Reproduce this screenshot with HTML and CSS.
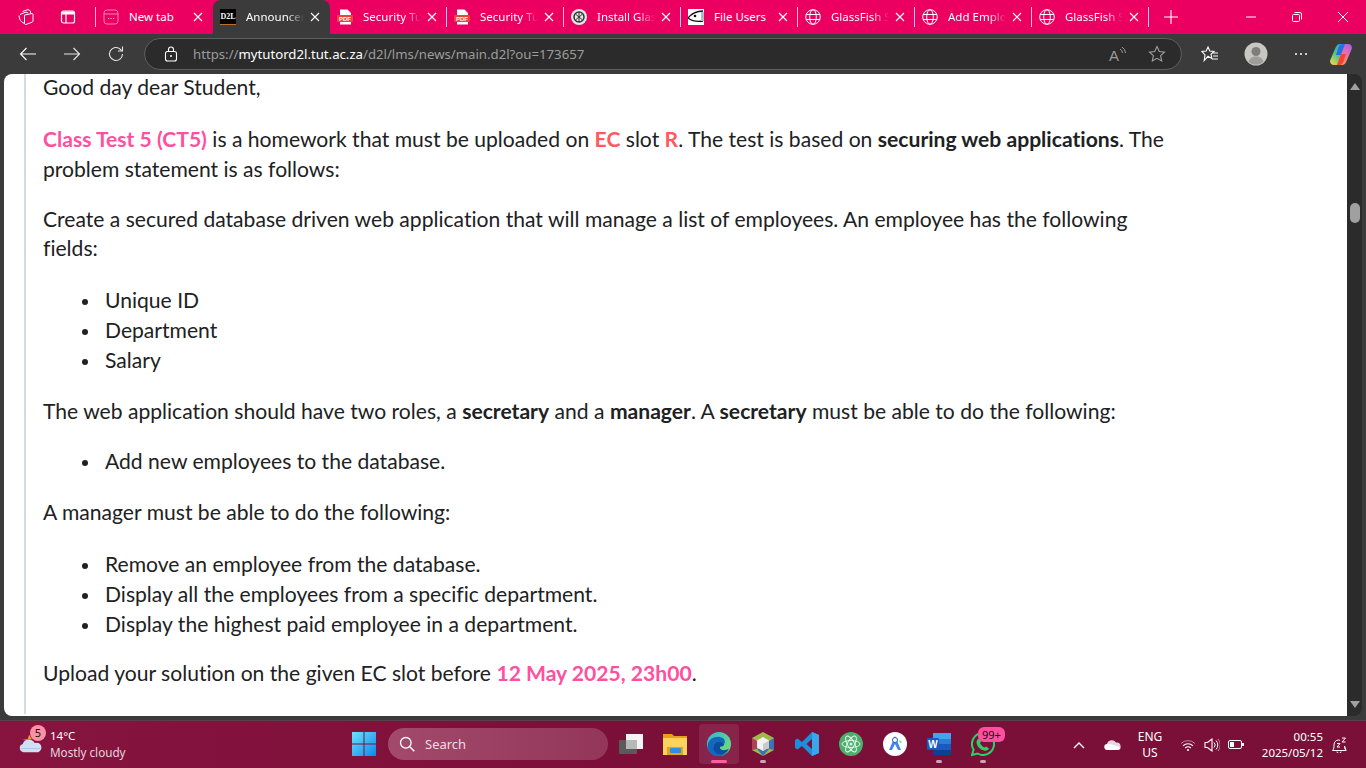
FILE: index.html
```html
<!DOCTYPE html>
<html lang="en">
<head>
    <meta charset="UTF-8">
    <title>Announcements</title>
    <link rel="stylesheet" href="styles.css">
</head>
<body>
    <svg class="defs" width="0" height="0">
        <symbol id="x" viewBox="0 0 10 10"><path d="M1 1l8 8M9 1l-8 8" fill="none" stroke="currentColor" stroke-width="1.1"/></symbol>
        <symbol id="globe" viewBox="0 0 16 16"><g fill="none" stroke="#fff" stroke-width="1"><circle cx="8" cy="8" r="7.3"/><ellipse cx="8" cy="8" rx="3.3" ry="7.3"/><path d="M1.2 5.5h13.6M1.2 10.5h13.6"/></g></symbol>
        <symbol id="pdf" viewBox="0 0 16 16"><path d="M3 .5h7.5L14 4v11.5H3z" fill="#fff"/><rect x="0" y="6" width="16" height="7" rx="1" fill="#f0413c"/><text x="8" y="11.8" text-anchor="middle" font-family="Liberation Sans" font-size="6" font-weight="700" fill="#fff">PDF</text></symbol>
    </svg>

    <div class="tabstrip">
        <div class="strip-btns">
            <svg class="strip-icon" width="18" height="18" viewBox="0 0 18 18"><g fill="none" stroke="#fff" stroke-width="1"><path d="M5.500 3.500l5.500-2 2.500 1.500v2"/><path d="M3 6.500L9 4l2 1"/><path d="M7.500 7l7.500-1.500c.6 0 1 .4 1 1V13c0 .6-.4 1-1 1.200L9 16.500c-.8.200-1.500-.3-1.500-1z"/><path d="M7.500 15.500C4 14.500 2 11 2 7.500"/></g></svg>
            <svg class="strip-icon" width="16" height="16" viewBox="0 0 16 16"><rect x="1.500" y="2" width="13" height="12" rx="2" fill="none" stroke="#fff" stroke-width="1.200"/><path d="M1.500 5h13M6 5v9" stroke="#fff" stroke-width="1.200"/><rect x="2" y="2.500" width="12" height="2.500" fill="#fff"/></svg>
        </div>
        <div class="tab sep">
            <svg class="favicon" width="16" height="16" viewBox="0 0 16 16"><rect x="1" y="1" width="14" height="14" rx="3" fill="none" stroke="#ff7fb0"/><path d="M1 5h14" stroke="#ff7fb0"/><path d="M5 9.500h1.200M7.500 9.500h1.200M10 9.500h1.200" stroke="#ffb3d0"/></svg>
            <span class="tab-title">New tab</span>
            <svg class="tab-x"><use href="#x"/></svg>
        </div>
        <div class="tab active">
            <span class="d2l">D2L</span>
            <span class="tab-title fade">Announcements</span>
            <svg class="tab-x"><use href="#x"/></svg>
        </div>
        <div class="tab">
            <svg class="favicon"><use href="#pdf"/></svg>
            <span class="tab-title fade">Security Tutorial</span>
            <svg class="tab-x"><use href="#x"/></svg>
        </div>
        <div class="tab sep">
            <svg class="favicon"><use href="#pdf"/></svg>
            <span class="tab-title fade">Security Tutorial</span>
            <svg class="tab-x"><use href="#x"/></svg>
        </div>
        <div class="tab sep">
            <svg class="favicon" viewBox="0 0 16 16"><circle cx="8" cy="8" r="8" fill="#e8e8e8"/><circle cx="8" cy="8" r="5" fill="none" stroke="#333" stroke-width="1.500"/><path d="M5 5.500l6 5M11 5.500l-6 5M8 3v10" stroke="#333"/></svg>
            <span class="tab-title fade">Install GlassFish</span>
            <svg class="tab-x"><use href="#x"/></svg>
        </div>
        <div class="tab sep">
            <svg class="favicon" viewBox="0 0 16 16"><rect width="16" height="16" fill="#fff"/><path d="M0 9C4 4 9 2 15 2M0 9c4 3 9 4 15 3" fill="none" stroke="#111" stroke-width="1.300"/><circle cx="7" cy="7" r="1.300" fill="#111"/><rect x="13" y="3" width="3" height="9" fill="#9cc2ec"/><rect x="14" y="6" width="1" height="3" fill="#f2a23c"/></svg>
            <span class="tab-title">File Users</span>
            <svg class="tab-x"><use href="#x"/></svg>
        </div>
        <div class="tab sep">
            <svg class="favicon"><use href="#globe"/></svg>
            <span class="tab-title fade">GlassFish Server</span>
            <svg class="tab-x"><use href="#x"/></svg>
        </div>
        <div class="tab sep">
            <svg class="favicon"><use href="#globe"/></svg>
            <span class="tab-title fade">Add Employee</span>
            <svg class="tab-x"><use href="#x"/></svg>
        </div>
        <div class="tab sep last">
            <svg class="favicon"><use href="#globe"/></svg>
            <span class="tab-title fade">GlassFish Server</span>
            <svg class="tab-x"><use href="#x"/></svg>
        </div>
        <svg class="new-tab" width="14" height="14" viewBox="0 0 14 14"><path d="M7 0v14M0 7h14" stroke="#fff" stroke-width="1.100"/></svg>
        <div class="win-btns">
            <svg width="10" height="10" viewBox="0 0 10 10"><path d="M0 5h10" stroke="#fff"/></svg>
            <svg width="10" height="10" viewBox="0 0 10 10"><rect x=".5" y="2.500" width="7" height="7" rx="1" fill="none" stroke="#fff"/><path d="M2.500 .5h5.500a1.500 1.500 0 0 1 1.500 1.500v5.500" fill="none" stroke="#fff"/></svg>
            <svg width="10" height="10" viewBox="0 0 10 10"><path d="M0 0l10 10M10 0L0 10" stroke="#fff"/></svg>
        </div>
    </div>

    <div class="toolbar">
        <div class="nav-btns">
            <svg width="18" height="14" viewBox="0 0 18 14"><path d="M17 7H1.500M7.500 1l-6 6 6 6" fill="none" stroke="#fff" stroke-width="1.100"/></svg>
            <svg width="18" height="14" viewBox="0 0 18 14"><path d="M1 7h15.500M10.500 1l6 6-6 6" fill="none" stroke="#e6e6e6" stroke-width="1.100"/></svg>
            <svg width="18" height="18" viewBox="0 0 18 18"><path d="M15.500 9a6.500 6.500 0 1 1-2-4.700L15 6" fill="none" stroke="#e6e6e6" stroke-width="1.100"/><path d="M15.500 1.500V6h-4.500" fill="none" stroke="#e6e6e6" stroke-width="1.100"/></svg>
        </div>
        <div class="address">
            <svg class="lock" width="14" height="16" viewBox="0 0 14 16"><rect x="1.500" y="5.500" width="11" height="9.500" rx="2" fill="none" stroke="#fff" stroke-width="1.100"/><path d="M4.500 5.500V3.500a2.500 2.500 0 0 1 5 0v2" fill="none" stroke="#fff" stroke-width="1.100"/><circle cx="7" cy="10" r="1" fill="#fff"/></svg>
            <span class="url"><span class="url-dim">https://</span><span class="url-host">mytutord2l.tut.ac.za</span><span class="url-dim">/d2l/lms/news/main.d2l?ou=173657</span></span>
            <div class="address-end">
                <svg width="18" height="16" viewBox="0 0 18 16"><text x="0" y="15" font-family="Liberation Sans" font-size="15" fill="#9a9a9a">A</text><path d="M11 3a5 5 0 0 1 2.500 4M13 1a8 8 0 0 1 3.500 6" fill="none" stroke="#9a9a9a"/></svg>
                <svg width="18" height="18" viewBox="0 0 18 18"><path d="M9 1.500l2.300 5 5.200.6-3.900 3.500 1.100 5.400L9 13.300 4.300 16l1.100-5.400L1.500 7.100l5.200-.6z" fill="none" stroke="#a0a0a0" stroke-width="1.100"/></svg>
            </div>
        </div>
        <svg class="fav-list" width="18" height="18" viewBox="0 0 18 18"><path d="M7 2l1.800 4 4.200.5-3 2.800.8 4.200L7 11.300 3.200 15.500 4 10 1 6.500 5.200 6z" fill="none" stroke="#fff" stroke-width="1.100"/><path d="M12 8h5M12 11h5M11 14h6" stroke="#fff"/></svg>
        <svg class="avatar" width="24" height="24" viewBox="0 0 24 24"><circle cx="12" cy="12" r="11.500" fill="#c9c7c2"/><circle cx="12" cy="9.500" r="4.500" fill="#807e7a"/><path d="M4.500 20c1-4 4-5.500 7.500-5.500s6.500 1.500 7.500 5.500a11.500 11.500 0 0 1-15 0z" fill="#a09e99"/></svg>
        <svg class="more" width="14" height="4" viewBox="0 0 14 4"><circle cx="2" cy="2" r="1" fill="#fff"/><circle cx="7" cy="2" r="1" fill="#fff"/><circle cx="12" cy="2" r="1" fill="#fff"/></svg>
        <svg class="copilot" width="22" height="21" viewBox="0 0 22 21">
            <defs>
                <linearGradient id="cpa" x1="0.800" y1="0" x2="0.100" y2="1"><stop offset="0" stop-color="#2a9fe8"/><stop offset=".5" stop-color="#4cc48a"/><stop offset="1" stop-color="#f0d84a"/></linearGradient>
                <linearGradient id="cpb" x1="0.800" y1="0" x2="0.300" y2="1"><stop offset="0" stop-color="#b060e8"/><stop offset=".5" stop-color="#f070a0"/><stop offset="1" stop-color="#f59a3c"/></linearGradient>
            </defs>
            <path d="M5 5c1-3 2.500-5 5-5h5L9 21H4C1 21-.5 18.500.3 16z" fill="url(#cpa)"/>
            <path d="M17 16c-1 3-2.500 5-5 5H7L13 0h5c3 0 4.500 2.500 3.700 5z" fill="url(#cpb)"/>
            <path d="M8.500 3.500C9.300 1.500 10.500 0 13 0h2l-3.500 9.500c-.3 1-1 1.500-2 1.500H6z" fill="#2170e4"/>
            <path d="M13.500 17.500c-.8 2-2 3.500-4.500 3.500H7l3.500-9.500c.3-1 1-1.500 2-1.500H16z" fill="#f0433a"/>
        </svg>
    </div>

    <div class="viewport">
        <main class="page">
            <div class="rule">
                <p class="first">Good day dear Student,</p>
                <p class="mb-20"><span class="pink">Class Test 5 (CT5)</span> is a homework that must be uploaded on <span class="coral">EC</span> slot <span class="coral">R</span>. The test is based on <strong>securing web applications</strong>. The problem statement is as follows:</p>
                <p class="tight">Create a secured database driven web application that will manage a list of employees. An employee has the following fields:</p>
                <ul>
                    <li>Unique ID</li>
                    <li>Department</li>
                    <li>Salary</li>
                </ul>
                <p class="mb-20">The web application should have two roles, a <strong>secretary</strong> and a <strong>manager</strong>. A <strong>secretary</strong> must be able to do the following:</p>
                <ul>
                    <li>Add new employees to the database.</li>
                </ul>
                <p class="mb-22">A manager must be able to do the following:</p>
                <ul class="mb-19">
                    <li>Remove an employee from the database.</li>
                    <li>Display all the employees from a specific department.</li>
                    <li>Display the highest paid employee in a department.</li>
                </ul>
                <p>Upload your solution on the given EC slot before <span class="pink">12 May 2025, 23h00</span>.</p>
            </div>
        </main>
        <div class="scrollbar">
            <span class="arrow-up"></span>
            <span class="thumb"></span>
            <span class="arrow-down"></span>
        </div>
    </div>

    <footer class="taskbar">
        <div class="weather">
            <svg class="weather-icon" width="26" height="22" viewBox="0 0 26 24"><path d="M3 8l6 1 2-6 3 5z" fill="#f0a030"/><path d="M5 22a4.500 4.500 0 0 1-1-8.800A7 7 0 0 1 17 12a5 5 0 0 1 4 10z" fill="#cfe0f5"/><path d="M2 18h21" stroke="#a9c5e8" stroke-width="1"/></svg>
            <span class="weather-badge">5</span>
            <div class="weather-text">
                <span class="temp">14°C</span>
                <span class="cond">Mostly cloudy</span>
            </div>
        </div>
        <div class="task-center">
            <div class="task-item">
                <svg width="24" height="24" viewBox="0 0 24 24"><defs><linearGradient id="win" x1="0" y1="0" x2="1" y2="1"><stop offset="0" stop-color="#6be3fb"/><stop offset="1" stop-color="#0d86ec"/></linearGradient></defs><path d="M0 0h11.500v11.500H0zM12.500 0H24v11.500H12.500zM0 12.500h11.500V24H0zM12.500 12.500H24V24H12.500z" fill="url(#win)"/></svg>
            </div>
            <div class="search">
                <svg width="16" height="16" viewBox="0 0 16 16"><circle cx="6.800" cy="6.800" r="5.300" fill="none" stroke="#fff" stroke-width="1.300"/><path d="M10.800 10.800l4.500 4.500" stroke="#fff" stroke-width="1.500"/></svg>
                <span>Search</span>
            </div>
            <div class="task-item">
                <svg width="24" height="20" viewBox="0 0 24 20"><rect x="7" y="0" width="17" height="15" fill="#f4f4f4"/><rect x="0" y="6" width="18" height="14" rx="1" fill="#5a5a5a"/><rect x="7" y="6" width="11" height="9" fill="#b8b8b8"/></svg>
            </div>
            <div class="task-item">
                <svg width="24" height="22" viewBox="0 0 24 22"><path d="M0 1h9l2 2h13v3H0z" fill="#e4a11b"/><path d="M0 5h24v17H0z" fill="#fcd45c"/><rect x="4" y="14" width="16" height="8" fill="#e0a420"/><rect x="7" y="15" width="11" height="5" rx="1" fill="#2f8fe0"/></svg>
            </div>
            <div class="task-item current">
                <svg width="24" height="24" viewBox="0 0 24 24"><defs><linearGradient id="edge" x1="0" y1="0" x2="1" y2="1"><stop offset="0" stop-color="#2eb6d8"/><stop offset="1" stop-color="#7ce36a"/></linearGradient></defs><circle cx="12" cy="12" r="12" fill="url(#edge)"/><path d="M1 17C-1 8 7 4 13 5c5 1 6 5 4 7-1-3-6-4-9-1-3 3-1 8 3 10 5 2 9 0 11-3-3 6-10 7-14 6-3-1-6-4-7-7z" fill="#1467c0"/><path d="M8 11c3-3 8-2 9 1 .5 1.500-1 2.500-3 2.500-1.500 0-1.500 2 0 3 2 1 5 1 8-1-2 5-8 7-12 5-4-2-5-7-2-10.500z" fill="#0b4d9e"/></svg>
                <span class="active-bar"></span>
            </div>
            <div class="task-item">
                <svg width="22" height="24" viewBox="0 0 22 24"><path d="M11 0l11 6v12l-11 6L0 18V6z" fill="#a1b94c"/><path d="M0 6l5 3v8l-5 1z" fill="#b0405a"/><path d="M22 6l-5 3v8l5 1zM11 24l-6-7h12z" fill="#3f6fb5"/><path d="M11 5l6 3.500v7L11 19l-6-3.500v-7z" fill="#f2f2f2"/><path d="M11 12l6-3.500v7L11 19z" fill="#c9c9c9"/></svg>
                <span class="open-dot"></span>
            </div>
            <div class="task-item">
                <svg width="24" height="24" viewBox="0 0 24 24"><path d="M17 0l7 3v18l-7 3L7 14l-4.500 3.500L0 16V8l2.500-1.500L7 10zm0 7l-5.500 5 5.500 5z" fill="#1c8fdc"/><path d="M17 0l7 3v18l-7 3z" fill="#38a8ec"/></svg>
            </div>
            <div class="task-item">
                <svg width="24" height="24" viewBox="0 0 24 24"><circle cx="12" cy="12" r="12" fill="#4caf6e"/><g fill="none" stroke="#dff5e5" stroke-width="1"><ellipse cx="12" cy="12" rx="9" ry="3.500"/><ellipse cx="12" cy="12" rx="9" ry="3.500" transform="rotate(60 12 12)"/><ellipse cx="12" cy="12" rx="9" ry="3.500" transform="rotate(120 12 12)"/></g><circle cx="12" cy="12" r="1.500" fill="#dff5e5"/></svg>
            </div>
            <div class="task-item">
                <svg width="24" height="24" viewBox="0 0 24 24"><circle cx="12" cy="12" r="12" fill="#fff"/><path d="M12 4l6 14h-3l-3-6-3 6H6z" fill="#4285f4"/><circle cx="12" cy="8" r="2.500" fill="#fff" stroke="#2a5caa"/><path d="M16 8l3 2-2 1z" fill="#3ddc84"/></svg>
            </div>
            <div class="task-item">
                <svg width="24" height="22" viewBox="0 0 24 22"><rect x="6" y="0" width="18" height="22" rx="1" fill="#2b7cd3"/><rect x="6" y="0" width="18" height="6" fill="#41a5ee"/><rect x="6" y="11" width="18" height="6" fill="#185abd"/><rect x="6" y="17" width="18" height="5" fill="#103f91"/><rect x="0" y="5" width="12" height="12" rx="1" fill="#185abd"/><text x="6" y="14.500" text-anchor="middle" font-family="Liberation Sans" font-size="10" font-weight="700" fill="#fff">W</text></svg>
                <span class="open-dot"></span>
            </div>
            <div class="task-item">
                <svg width="24" height="24" viewBox="0 0 24 24"><path d="M12 1a11 11 0 0 0-9.400 16.700L1 23l5.500-1.500A11 11 0 1 0 12 1z" fill="none" stroke="#25d366" stroke-width="2"/><path d="M8 6.500l2 3-1 1.500c1 2 2.500 3.500 4.500 4.500l1.500-1 3 2c-1 2-3 2.500-5 2-4-1-7-4-7.500-8 0-2 1-3.500 2.500-4z" fill="#25d366"/></svg>
                <span class="chat-badge">99+</span>
                <span class="open-dot"></span>
            </div>
        </div>
        <div class="tray">
            <svg class="tray-chevron" width="12" height="8" viewBox="0 0 12 8"><path d="M1 7l5-5 5 5" fill="none" stroke="#fff" stroke-width="1.400"/></svg>
            <svg class="tray-cloud" width="17" height="11" viewBox="0 0 17 11"><path d="M3.500 11a3 3 0 0 1-.5-6A5 5 0 0 1 12 3.500a3.800 3.800 0 0 1 1.500 7.500z" fill="#e8d5dd"/><path d="M3.500 11a3 3 0 0 1-1-5.800C6 4.500 11 6 16.500 9c-.5 1-1.500 2-3 2z" fill="#fff"/></svg>
            <div class="lang"><span>ENG</span><span>US</span></div>
            <svg class="tray-wifi" width="16" height="12" viewBox="0 0 16 12"><path d="M1 4.500a10 10 0 0 1 14 0" fill="none" stroke="#b98ca0"/><path d="M3 6.800a7 7 0 0 1 10 0M5.200 9a4 4 0 0 1 5.600 0" fill="none" stroke="#fff" stroke-width="1.100"/><circle cx="8" cy="11" r="1" fill="#fff"/></svg>
            <svg class="tray-sound" width="16" height="14" viewBox="0 0 16 14"><path d="M1 4.500h2.500L8 1v12L3.500 9.500H1z" fill="none" stroke="#fff" stroke-width="1.100"/><path d="M10 4.500a3.500 3.500 0 0 1 0 5" fill="none" stroke="#fff"/><path d="M12 2.500a6.500 6.500 0 0 1 0 9" fill="none" stroke="#fff"/><path d="M14 1a9 9 0 0 1 0 12" fill="none" stroke="#b98ca0"/></svg>
            <svg class="tray-battery" width="16" height="9" viewBox="0 0 16 9"><rect x=".5" y=".5" width="13" height="8" rx="1.500" fill="none" stroke="#fff"/><rect x="2" y="2" width="4" height="5" fill="#fff"/><rect x="14" y="3" width="2" height="3" fill="#fff"/></svg>
            <div class="clock"><span>00:55</span><span>2025/05/12</span></div>
            <svg class="tray-bell" width="16" height="16" viewBox="0 0 16 16"><path d="M1.500 13.500c1.500-1.500 1.500-3 1.500-5.500C3 5 5 3 7.500 3c.5 0 1 .1 1.500.3M13.500 9c.1 2 .6 3.300 1.500 4.500zM1.500 13.500H15M6 14.500a2 2 0 0 0 4 0" fill="none" stroke="#fff"/><path d="M6 6.500h3l-3 3.500h3M11 1h3.500L11 5h3.500" fill="none" stroke="#fff"/></svg>
        </div>
    </footer>
</body>
</html>
```

FILE: styles.css
```css
* {
    box-sizing: border-box;
}
html, body {
    margin: 0;
    height: 100%;
}
body {
    width: 1366px;
    height: 768px;
    overflow: hidden;
    display: flex;
    flex-direction: column;
    background: #3b3b3b;
    font-family: "Noto Sans", sans-serif;
    color: #fff;
}
.defs {
    position: absolute;
}

/* tab strip */
.tabstrip {
    height: 34px;
    display: flex;
    align-items: center;
    background: #eb0062;
    flex: none;
}
.strip-btns {
    width: 96px;
    display: flex;
    align-items: center;
    padding-left: 17px;
    gap: 25px;
}
.tab {
    position: relative;
    width: 117px;
    height: 34px;
    display: flex;
    align-items: center;
    padding: 0 9px 0 7px;
    font-size: 11.500px;
}
.tab.sep::before {
    content: "";
    position: absolute;
    left: -1px;
    top: 7px;
    height: 20px;
    width: 1px;
    background: #ffc2da;
}
.tab.last::after {
    content: "";
    position: absolute;
    right: 0;
    top: 7px;
    height: 20px;
    width: 1px;
    background: #ffc2da;
}
.tab.active {
    background: #3b3b3b;
    border-radius: 8px 8px 0 0;
    height: 34px;
}
.favicon {
    width: 16px;
    height: 16px;
    flex: none;
}
.d2l {
    width: 16px;
    height: 16px;
    flex: none;
    background: #000;
    color: #fff;
    font: 700 8px/16px "Liberation Serif", serif;
    text-align: center;
    border-bottom: 1px solid #c96a1c;
}
.tab-title {
    margin-left: 10px;
    margin-bottom: 2px;
    width: 58px;
    flex: none;
    white-space: nowrap;
    overflow: hidden;
}
.tab-title.fade {
    -webkit-mask-image: linear-gradient(to right, #000 70%, transparent 100%);
    mask-image: linear-gradient(to right, #000 70%, transparent 100%);
}
.tab-x {
    width: 10px;
    height: 10px;
    margin-left: auto;
    margin-right: 1px;
    color: #fff;
    flex: none;
}
.new-tab {
    margin-left: 15px;
}
.win-btns {
    margin-left: auto;
    display: flex;
    gap: 36px;
    padding-right: 18px;
}

/* toolbar */
.toolbar {
    height: 40px;
    flex: none;
    display: flex;
    align-items: center;
    background: #3b3b3b;
}
.nav-btns {
    width: 144px;
    padding-left: 19px;
    display: flex;
    align-items: center;
    gap: 26px;
}
.address {
    width: 1038px;
    height: 32px;
    display: flex;
    align-items: center;
    padding-left: 19px;
    background: #2b2b2b;
    border: 1px solid #5f5f5f;
    border-radius: 16px;
    font-size: 13.200px;
}
.url {
    margin-left: 15px;
    white-space: nowrap;
}
.url-dim {
    color: #9c9c9c;
}
.url-host {
    color: #fff;
}
.address-end {
    margin-left: auto;
    display: flex;
    align-items: center;
    gap: 21px;
    padding-right: 15px;
}
.fav-list {
    margin-left: 19px;
}
.avatar {
    margin-left: 25px;
}
.more {
    margin-left: 26px;
}
.copilot {
    margin-left: 22px;
}

/* page area */
.viewport {
    height: 642px;
    flex: none;
    display: flex;
    padding-left: 4px;
}
.page {
    width: 1343px;
    height: 642px;
    background: #fff;
    border-radius: 8px 0 0 8px;
    overflow: hidden;
    padding-left: 20px;
    color: #202122;
    font-family: Lato, sans-serif;
    font-size: 21.100px;
    line-height: 30px;
    font-variant-ligatures: none;
}
.rule {
    height: 100%;
    border-left: 2px solid #d3dbe3;
    padding-left: 17px;
    width: 1149px;
}
.rule p {
    margin: 0 0 21px;
}
.rule p.first {
    margin: -2px 0 22px;
}
.rule p.mb-20 {
    margin-bottom: 20px;
}
.rule p.mb-22 {
    margin-bottom: 22px;
}
.rule p.tight {
    line-height: 29px;
    margin-bottom: 23px;
}
.rule ul {
    margin: 0 0 21px;
    padding-left: 62px;
    list-style: none;
}
.rule ul.mb-19 {
    margin-bottom: 19px;
}
.rule li::before {
    content: "";
    display: inline-block;
    width: 6px;
    height: 6px;
    margin-left: -23px;
    margin-right: 17px;
    border-radius: 50%;
    background: #202122;
    vertical-align: 3px;
}
.rule strong {
    font-weight: 700;
}
.pink {
    color: #ff4f9e;
    font-weight: 700;
}
.coral {
    color: #ff5a5f;
    font-weight: 700;
}
.scrollbar {
    width: 15px;
    height: 642px;
    position: relative;
    background: #2b2b2b;
    border-radius: 0 8px 8px 0;
}
.arrow-up, .arrow-down {
    position: absolute;
    left: 3px;
    width: 0;
    height: 0;
    border-left: 5px solid transparent;
    border-right: 5px solid transparent;
}
.arrow-up {
    top: 9px;
    border-bottom: 7px solid #a0a0a0;
}
.arrow-down {
    bottom: 8px;
    border-top: 7px solid #a0a0a0;
}
.thumb {
    position: absolute;
    left: 3px;
    top: 129px;
    width: 10px;
    height: 20px;
    border-radius: 5px;
    background: #a0a0a0;
}

/* taskbar */
.taskbar {
    margin-top: 4px;
    height: 48px;
    flex: none;
    display: flex;
    align-items: center;
    padding-bottom: 2px;
    background: linear-gradient(to right, #86143f, #7a0f38 50%, #7a0f38);
    border-top: 1px solid #5a4048;
    font-size: 12px;
}
.weather {
    width: 342px;
    display: flex;
    align-items: center;
    padding-left: 18px;
    position: relative;
}
.weather-badge {
    position: absolute;
    left: 30px;
    top: -3px;
    width: 16px;
    height: 16px;
    border-radius: 50%;
    background: #ff8fa5;
    color: #111;
    font-size: 11px;
    line-height: 16px;
    text-align: center;
}
.weather-icon {
    margin-top: -2px;
}
.weather-text {
    margin-left: 6px;
    display: flex;
    flex-direction: column;
    line-height: 16px;
}
.temp {
    font-size: 11.500px;
}
.cond {
    color: #e8d5dd;
    font-size: 11.700px;
}
.task-center {
    display: flex;
    align-items: center;
}
.task-item {
    position: relative;
    width: 44px;
    height: 40px;
    display: flex;
    align-items: center;
    justify-content: center;
}
.task-item.current {
    background: rgba(255, 255, 255, 0.09);
    border-radius: 4px;
    width: 40px;
    margin: 0 2px;
}
.active-bar {
    position: absolute;
    left: 12px;
    bottom: 1px;
    width: 16px;
    height: 3px;
    border-radius: 2px;
    background: #ff5da2;
}
.open-dot {
    position: absolute;
    left: 19px;
    bottom: 1px;
    width: 6px;
    height: 3px;
    border-radius: 2px;
    background: #c9a5b5;
}
.chat-badge {
    position: absolute;
    left: 17px;
    top: 3px;
    padding: 0 4px;
    height: 15px;
    border-radius: 6px;
    background: #ff4f9e;
    color: #111;
    font-size: 11px;
    line-height: 15px;
}
.search {
    width: 220px;
    height: 32px;
    margin: 0 1px 0 2px;
    display: flex;
    align-items: center;
    padding-left: 11px;
    gap: 10px;
    border-radius: 16px;
    background: linear-gradient(to right, #a24a6c, #93365a);
    color: #eedde4;
    font-size: 13px;
}
.tray {
    margin-left: auto;
    margin-top: 2px;
    height: 47px;
    width: 293px;
    display: flex;
    align-items: center;
    flex: none;
}
.tray-cloud {
    margin-left: 19px;
}
.lang {
    width: 40px;
    margin-left: 9px;
    display: flex;
    flex-direction: column;
    align-items: center;
    line-height: 16px;
}
.tray-wifi {
    margin-left: 10px;
}
.tray-sound {
    margin-left: 8px;
}
.tray-battery {
    margin-left: 8px;
}
.clock {
    width: 72px;
    margin-left: 7px;
    display: flex;
    flex-direction: column;
    align-items: flex-end;
    line-height: 16px;
    font-size: 11.500px;
}
.tray-bell {
    margin-left: 8px;
}
```
